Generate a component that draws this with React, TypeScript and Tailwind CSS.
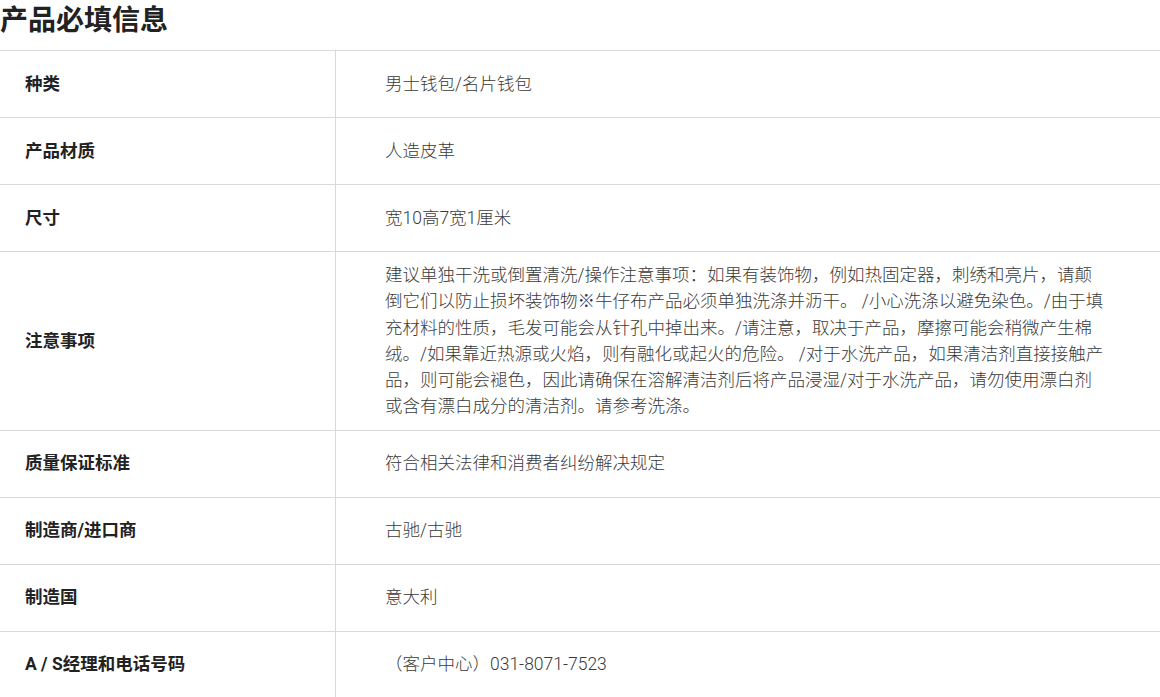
const rows: { label: string; value: string[] }[] = [
  { label: "种类", value: ["男士钱包/名片钱包"] },
  { label: "产品材质", value: ["人造皮革"] },
  { label: "尺寸", value: ["宽10高7宽1厘米"] },
  {
    label: "注意事项",
    value: [
      "建议单独干洗或倒置清洗/操作注意事项：如果有装饰物，例如热固定器，刺绣和亮片，请颠",
      "倒它们以防止损坏装饰物※牛仔布产品必须单独洗涤并沥干。 /小心洗涤以避免染色。/由于填",
      "充材料的性质，毛发可能会从针孔中掉出来。/请注意，取决于产品，摩擦可能会稍微产生棉",
      "绒。/如果靠近热源或火焰，则有融化或起火的危险。 /对于水洗产品，如果清洁剂直接接触产",
      "品，则可能会褪色，因此请确保在溶解清洁剂后将产品浸湿/对于水洗产品，请勿使用漂白剂",
      "或含有漂白成分的清洁剂。请参考洗涤。",
    ],
  },
  { label: "质量保证标准", value: ["符合相关法律和消费者纠纷解决规定"] },
  { label: "制造商/进口商", value: ["古驰/古驰"] },
  { label: "制造国", value: ["意大利"] },
  { label: "A / S经理和电话号码", value: ["（客户中心）031-8071-7523"] },
];

export default function App() {
  return (
    <div
      className="min-h-screen bg-white text-[#222]"
      style={{ fontFamily: 'Roboto, "Noto Sans CJK SC", sans-serif' }}
    >
      <h2 className="mb-[8px] text-[28px] font-bold leading-[42px] text-[#222]">产品必填信息</h2>
      <div className="border-t border-[#d9d9d9]">
        {rows.map((row) => (
          <div key={row.label} className="flex min-h-[67px] border-b border-[#d9d9d9]">
            <div className="flex w-[336px] shrink-0 items-center border-r border-[#d9d9d9] pl-[25px] text-[17.5px] font-bold">
              {row.label}
            </div>
            <div className="flex flex-1 items-center py-[10px] pl-[49px] text-[17.5px] leading-[26.25px] font-light text-[#3a3a3a]">
              <p>
                {row.value.map((line, i) => (
                  <span key={i} className="block whitespace-nowrap">
                    {line}
                  </span>
                ))}
              </p>
            </div>
          </div>
        ))}
      </div>
    </div>
  );
}
